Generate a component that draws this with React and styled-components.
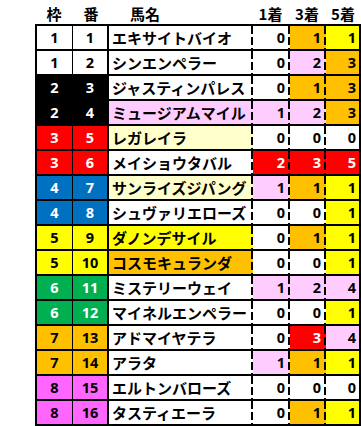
import React from "react";
import styled, { createGlobalStyle } from "styled-components";

const GlobalStyle = createGlobalStyle`
  html, body {
    margin: 0;
    padding: 0;
    background: #fff;
  }
  body {
    font-family: "Noto Sans CJK JP", "Noto Sans", sans-serif;
  }
`;

const WAKU = {
  1: { bg: "#ffffff", fg: "#000" },
  2: { bg: "#000000", fg: "#fff" },
  3: { bg: "#ff0000", fg: "#fff" },
  4: { bg: "#0070c0", fg: "#fff" },
  5: { bg: "#ffff00", fg: "#000" },
  6: { bg: "#00b050", fg: "#fff" },
  7: { bg: "#ffc000", fg: "#000" },
  8: { bg: "#ff66ff", fg: "#000" },
};

const W = "#ffffff";
const P = "#ffccff";
const O = "#ffc000";
const Y = "#ffff00";
const LY = "#ffffcc";
const R = "#ff0000";

const horses = [
  { waku: 1, num: 1, name: "エキサイトバイオ", nameBg: W, res: [[0, W], [1, O], [1, Y]] },
  { waku: 1, num: 2, name: "シンエンペラー", nameBg: W, res: [[0, W], [2, P], [3, O]] },
  { waku: 2, num: 3, name: "ジャスティンパレス", nameBg: W, res: [[0, W], [1, O], [3, O]] },
  { waku: 2, num: 4, name: "ミュージアムマイル", nameBg: P, res: [[1, P], [2, P], [3, O]] },
  { waku: 3, num: 5, name: "レガレイラ", nameBg: LY, res: [[0, W], [0, W], [0, W]] },
  { waku: 3, num: 6, name: "メイショウタバル", nameBg: W, res: [[2, R], [3, R], [5, R]] },
  { waku: 4, num: 7, name: "サンライズジパング", nameBg: LY, res: [[1, P], [1, O], [1, Y]] },
  { waku: 4, num: 8, name: "シュヴァリエローズ", nameBg: W, res: [[0, W], [0, W], [1, Y]] },
  { waku: 5, num: 9, name: "ダノンデサイル", nameBg: Y, res: [[0, W], [1, O], [1, Y]] },
  { waku: 5, num: 10, name: "コスモキュランダ", nameBg: O, res: [[0, W], [0, W], [1, Y]] },
  { waku: 6, num: 11, name: "ミステリーウェイ", nameBg: W, res: [[1, P], [2, P], [4, P]] },
  { waku: 6, num: 12, name: "マイネルエンペラー", nameBg: W, res: [[0, W], [0, W], [1, Y]] },
  { waku: 7, num: 13, name: "アドマイヤテラ", nameBg: W, res: [[0, W], [3, R], [4, P]] },
  { waku: 7, num: 14, name: "アラタ", nameBg: W, res: [[1, P], [1, O], [1, Y]] },
  { waku: 8, num: 15, name: "エルトンバローズ", nameBg: W, res: [[0, W], [0, W], [0, W]] },
  { waku: 8, num: 16, name: "タスティエーラ", nameBg: W, res: [[0, W], [1, O], [1, Y]] },
];

export default function App() {
  return (
    <Page>
      <GlobalStyle />
      <HeaderRow>
        <HeadCell>枠</HeadCell>
        <HeadCell>番</HeadCell>
        <HeadCell $left>馬名</HeadCell>
        <HeadCell>1着</HeadCell>
        <HeadCell>3着</HeadCell>
        <HeadCell>5着</HeadCell>
      </HeaderRow>
      <Table>
        {horses.map((h, i) => {
          const last = i === horses.length - 1;
          const w = WAKU[h.waku];
          return (
            <React.Fragment key={h.num}>
              <WakuCell $bg={w.bg} $fg={w.fg} $last={last} $rule={1}>
                {h.waku}
              </WakuCell>
              <WakuCell $bg={w.bg} $fg={w.fg} $last={last} $rule={2}>
                {h.num}
              </WakuCell>
              <NameCell $bg={h.nameBg} $last={last}>
                {h.name}
              </NameCell>
              {h.res.map(([v, bg], j) => (
                <NumCell
                  key={j}
                  $bg={bg}
                  $fg={bg === R ? "#fff" : "#000"}
                  $last={last}
                  $dash={j < 2}
                >
                  {v}
                </NumCell>
              ))}
            </React.Fragment>
          );
        })}
      </Table>
    </Page>
  );
}

const Page = styled.div`
  width: 361px;
  height: 426px;
  box-sizing: border-box;
  padding-left: 35px;
  overflow: hidden;
`;

const HeaderRow = styled.div`
  display: grid;
  grid-template-columns: 38px 36px 143px 37px 36px 36px;
  height: 24px;
  align-items: center;
`;

const HeadCell = styled.div`
  font-size: 15px;
  font-weight: 700;
  line-height: 1;
  color: #000;
  text-align: ${(p) => (p.$left ? "left" : "center")};
  padding-left: ${(p) => (p.$left ? "21px" : "0")};
  padding-top: 3px;
`;

const Table = styled.div`
  display: grid;
  grid-template-columns: 36px 36px 144px 37px 36px 33px;
  width: 326px;
  box-sizing: border-box;
  border: 2px solid #000;
`;

const Cell = styled.div`
  box-sizing: border-box;
  height: ${(p) => (p.$last ? "23px" : "25px")};
  border-bottom: ${(p) => (p.$last ? "none" : "2px solid #000")};
  display: flex;
  align-items: center;
  font-size: 15px;
  font-weight: 700;
  line-height: 1;
  white-space: nowrap;
  overflow: hidden;
`;

const dashes = (bg) =>
  `repeating-linear-gradient(to bottom, #000 0 8px, transparent 8px 11px) right top / 2px 100% no-repeat, ${bg}`;

const WakuCell = styled(Cell)`
  justify-content: center;
  background: ${(p) => p.$bg};
  color: ${(p) => p.$fg};
  border-right: ${(p) => p.$rule}px solid #000;
  font-family: "Noto Sans", "Noto Sans CJK JP", sans-serif;
  font-size: 14.5px;
`;

const NameCell = styled(Cell)`
  padding-left: 3px;
  background: ${(p) => dashes(p.$bg)};
  color: #000;
`;

const NumCell = styled(Cell)`
  justify-content: flex-end;
  padding-right: ${(p) => (p.$dash ? "5px" : "3px")};
  background: ${(p) => (p.$dash ? dashes(p.$bg) : p.$bg)};
  color: ${(p) => p.$fg};
  font-family: "Noto Sans", "Noto Sans CJK JP", sans-serif;
  font-size: 14.5px;
`;
